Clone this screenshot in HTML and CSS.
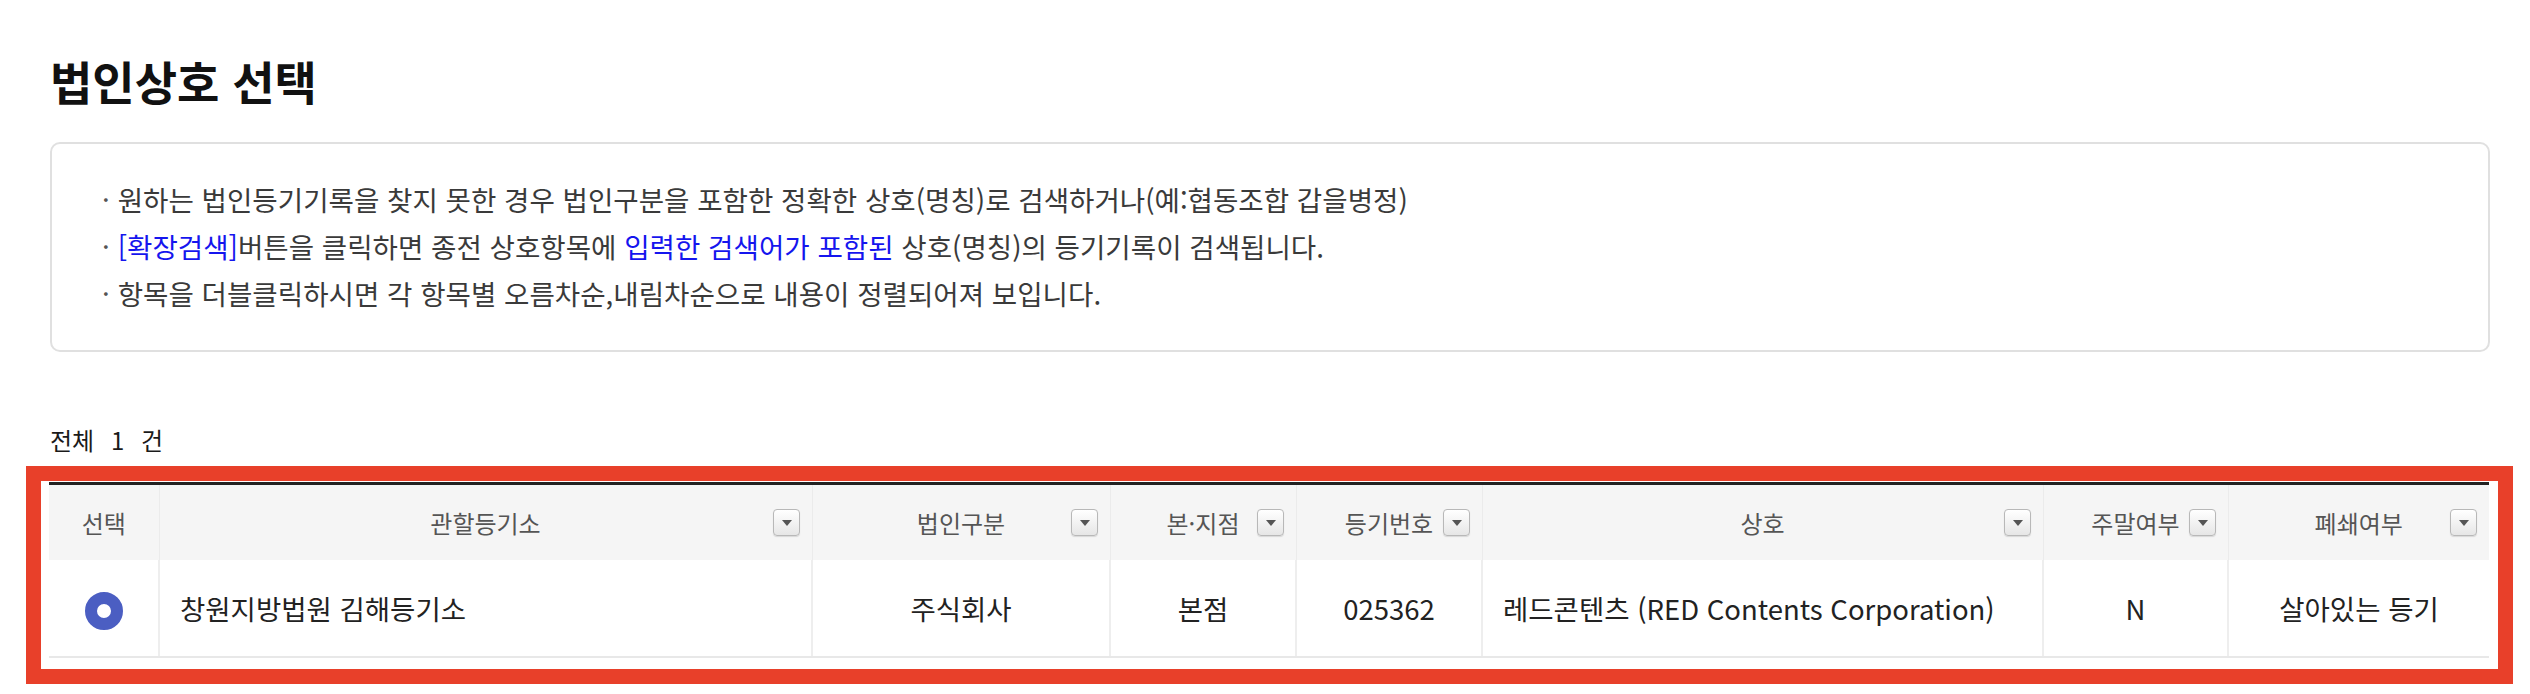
FILE: index.html
```html
<!DOCTYPE html>
<html lang="ko">
<head>
  <meta charset="UTF-8">
  <title>법인상호 선택</title>
  <link rel="stylesheet" href="styles.css">
</head>
<body>
  <div class="page">
    <h1 class="page-title">법인상호 선택</h1>

    <div class="notice">
      <ul>
        <li>원하는 법인등기기록을 찾지 못한 경우 법인구분을 포함한 정확한 상호(명칭)로 검색하거나(예:협동조합 갑을병정)</li>
        <li><span class="blue">[확장검색]</span>버튼을 클릭하면 종전 상호항목에 <span class="blue">입력한 검색어가 포함된</span> 상호(명칭)의 등기기록이 검색됩니다.</li>
        <li>항목을 더블클릭하시면 각 항목별 오름차순,내림차순으로 내용이 정렬되어져 보입니다.</li>
      </ul>
    </div>

    <div class="total">전체 <span class="count">1</span> 건</div>

    <div class="highlight">
      <table class="grid">
        <colgroup>
          <col class="c-sel">
          <col class="c-office">
          <col class="c-type">
          <col class="c-branch">
          <col class="c-no">
          <col class="c-name">
          <col class="c-weekend">
          <col class="c-closed">
        </colgroup>
        <thead>
          <tr>
            <th>선택</th>
            <th>관할등기소<span class="drop"></span></th>
            <th>법인구분<span class="drop"></span></th>
            <th>본·지점<span class="drop"></span></th>
            <th>등기번호<span class="drop"></span></th>
            <th>상호<span class="drop"></span></th>
            <th>주말여부<span class="drop"></span></th>
            <th>폐쇄여부<span class="drop"></span></th>
          </tr>
        </thead>
        <tbody>
          <tr>
            <td class="center"><span class="radio"></span></td>
            <td class="left">창원지방법원 김해등기소</td>
            <td class="center">주식회사</td>
            <td class="center">본점</td>
            <td class="center">025362</td>
            <td class="left">레드콘텐츠 (RED Contents Corporation)</td>
            <td class="center">N</td>
            <td class="center">살아있는 등기</td>
          </tr>
        </tbody>
      </table>
    </div>
  </div>
</body>
</html>
```

FILE: styles.css
```css
body {
  margin: 0;
  background: #fff;
  font-family: "Noto Sans CJK KR", "Noto Sans", sans-serif;
  color: #333;
}
.page {
  padding: 50px 40px 0 50px;
}
.page-title {
  margin: 0;
  font-size: 46px;
  line-height: 60px;
  font-weight: bold;
  color: #111;
}
.notice {
  margin-top: 32px;
  border: 2px solid #e0e0e0;
  border-radius: 10px;
  padding: 32px 20px 33px 50px;
}
.notice ul {
  margin: 0;
  padding: 0;
  list-style: none;
}
.notice li {
  font-size: 27.6px;
  line-height: 47px;
  color: #3a3a3a;
}
.notice li::before {
  content: "·";
  margin-right: 8px;
  color: #555;
}
.blue {
  color: #1515ee;
}
.total {
  margin-top: 73px;
  font-size: 24px;
  line-height: 30px;
  color: #1a1a1a;
}
.count {
  margin: 0 10px;
}
.highlight {
  margin: 11px -23px 0 -24px;
  border: 15px solid #e8402a;
  padding: 1px 9px 11px 8px;
}
.grid {
  width: 100%;
  table-layout: fixed;
  border-collapse: collapse;
  border-top: 3px solid #222;
}
.c-sel { width: 110px; }
.c-office { width: 653px; }
.c-type { width: 298px; }
.c-branch { width: 186px; }
.c-no { width: 186px; }
.c-name { width: 561px; }
.c-weekend { width: 185px; }
.c-closed { width: 261px; }
.grid th {
  position: relative;
  height: 75px;
  padding: 0;
  background: #f5f5f5;
  border-left: 1px solid #ebebeb;
  font-size: 24px;
  font-weight: normal;
  color: #555;
}
.grid th:first-child,
.grid td:first-child {
  border-left: none;
}
.grid td {
  height: 96px;
  padding: 0 20px;
  border-left: 2px solid #eeeeee;
  border-bottom: 2px solid #e8e8e8;
  font-size: 27.5px;
  color: #222;
}
.grid td.center {
  text-align: center;
}
.grid td.left {
  text-align: left;
}
.drop {
  position: absolute;
  right: 12px;
  top: 50%;
  width: 27px;
  height: 27px;
  margin-top: -14px;
  box-sizing: border-box;
  border: 1px solid #b8b8b8;
  border-radius: 4px;
  background: linear-gradient(#ffffff, #e6e6e6);
  box-shadow: 0 1px 1px rgba(0, 0, 0, 0.12);
}
.drop::after {
  content: "";
  position: absolute;
  left: 8px;
  top: 10px;
  border-left: 5px solid transparent;
  border-right: 5px solid transparent;
  border-top: 6px solid #555;
}
.radio {
  display: inline-block;
  vertical-align: middle;
  width: 38px;
  height: 38px;
  box-sizing: border-box;
  border: 12px solid #4b5ec2;
  border-radius: 50%;
  background: #fff;
}
```
